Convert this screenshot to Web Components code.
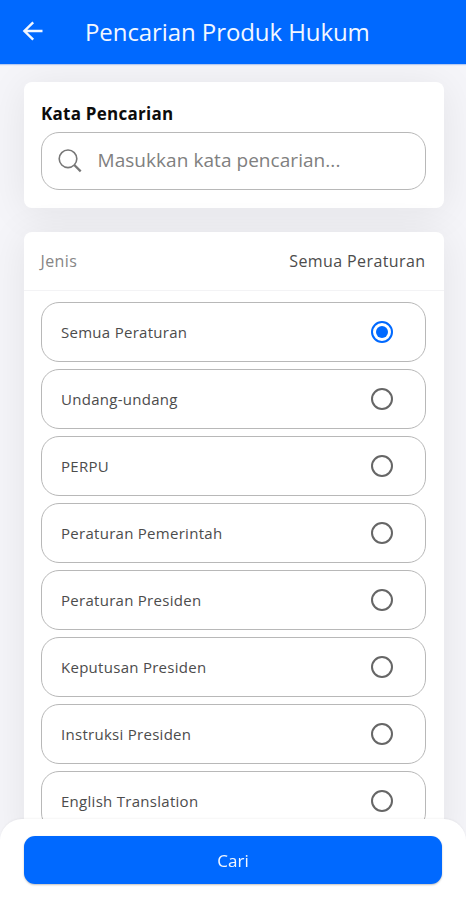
<!DOCTYPE html>
<html lang="id">
<head>
<meta charset="utf-8">
<meta name="viewport" content="width=device-width, initial-scale=1">
<title>Pencarian Produk Hukum</title>
<style>
body {
    margin: 0;
    height: 100vh;
    overflow: hidden;
    background: #f5f5f9;
    font-family: 'Open Sans', 'Noto Sans', sans-serif;
    color: #4c4c4c;
}
</style>
</head>
<body>
<search-page>
    <app-header slot="header">Pencarian Produk Hukum</app-header>
    <app-card>
        <search-field label="Kata Pencarian" placeholder="Masukkan kata pencarian..."></search-field>
    </app-card>
    <app-card>
        <filter-header slot="header" value="Semua Peraturan">Jenis</filter-header>
        <radio-list>
            <radio-option checked>Semua Peraturan</radio-option>
            <radio-option>Undang-undang</radio-option>
            <radio-option>PERPU</radio-option>
            <radio-option>Peraturan Pemerintah</radio-option>
            <radio-option>Peraturan Presiden</radio-option>
            <radio-option>Keputusan Presiden</radio-option>
            <radio-option>Instruksi Presiden</radio-option>
            <radio-option>English Translation</radio-option>
        </radio-list>
    </app-card>
    <bottom-bar slot="footer">Cari</bottom-bar>
</search-page>

<script>
class BaseElement extends HTMLElement {
    constructor() {
        super()
        const shadow = this.attachShadow({ mode: 'open' });
        const template = document.createElement('template')
        template.innerHTML = this.render()
        shadow.append(template.content.cloneNode(true))
    }
}

class SearchPage extends BaseElement {
    render() {
        return `
        <style>
        :host {
            display: flex;
            flex-direction: column;
            height: 100vh;
            overflow: hidden;
        }
        main {
            flex: 1;
            min-height: 0;
            display: flex;
            flex-direction: column;
            gap: 24px;
            padding: 18px 22.5px 0 23.5px;
            overflow: hidden;
        }
        </style>
        <slot name="header"></slot>
        <main><slot></slot></main>
        <slot name="footer"></slot>`
    }
}

class AppHeader extends BaseElement {
    render() {
        return `
        <style>
        :host {
            display: flex;
            align-items: center;
            flex: none;
            gap: 39px;
            box-sizing: border-box;
            height: 64px;
            padding: 0 20px;
            background: #0069ff;
            color: #f2f7ff;
            box-shadow: 0 1px 1px rgba(0, 80, 220, .25);
        }
        svg {
            display: block;
            flex: none;
            margin-top: -2px;
        }
        h1 {
            margin: 0;
            font-size: 24px;
            font-weight: 400;
            line-height: 64px;
            letter-spacing: -.08px;
            white-space: nowrap;
        }
        </style>
        <svg width="26" height="26" viewBox="0 0 26 26" fill="none" stroke="currentColor" stroke-width="2.4">
            <path d="M22.5 13H4.5M13.2 4.4L4.4 13l8.8 8.6"/>
        </svg>
        <h1><slot></slot></h1>`
    }
}

class AppCard extends BaseElement {
    render() {
        return `
        <style>
        :host {
            display: block;
            flex: none;
            border-radius: 8px;
            background: #fff;
            box-shadow: 0 4px 40px rgba(20, 20, 30, .08);
        }
        div {
            padding: 12px 18px 18px 17.5px;
        }
        </style>
        <slot name="header"></slot>
        <div><slot></slot></div>`
    }
}

class SearchField extends BaseElement {
    render() {
        return `
        <style>
        :host {
            display: block;
            padding-top: 8px;
        }
        label {
            display: block;
            font-size: 17px;
            font-weight: 700;
            line-height: 24px;
            letter-spacing: .25px;
            margin-bottom: 6px;
            color: #0c0c0c;
        }
        .box {
            display: flex;
            align-items: center;
            gap: 16px;
            box-sizing: border-box;
            height: 58px;
            padding: 0 15.5px;
            border: 1px solid #b8b8b8;
            border-radius: 18px;
            color: #808080;
            font-size: 19px;
            letter-spacing: .05px;
            white-space: nowrap;
        }
        .box span {
            margin-top: -2px;
        }
        svg {
            flex: none;
            margin-top: -1px;
        }
        </style>
        <label>${this.getAttribute('label')}</label>
        <div class="box">
            <svg width="24" height="24" viewBox="0 0 24 24" fill="none" stroke="#777">
                <circle cx="10" cy="9.8" r="8.8" stroke-width="1.6"/>
                <path d="M16.3 16l6.4 6.4" stroke-width="2.3"/>
            </svg>
            <span>${this.getAttribute('placeholder')}</span>
        </div>`
    }
}

class FilterHeader extends BaseElement {
    render() {
        return `
        <style>
        :host {
            display: flex;
            justify-content: space-between;
            align-items: center;
            box-sizing: border-box;
            height: 59px;
            margin-bottom: -1px;
            padding: 0 18px 0 17px;
            border-bottom: 1px solid #f3f3f5;
            font-size: 16px;
            letter-spacing: .4px;
        }
        .name {
            color: #868686;
        }
        </style>
        <span class="name"><slot></slot></span>
        <span>${this.getAttribute('value')}</span>`
    }
}

class RadioList extends BaseElement {
    render() {
        return `
        <style>
        :host {
            display: flex;
            flex-direction: column;
            gap: 7px;
        }
        </style>
        <slot></slot>`
    }
}

class RadioOption extends BaseElement {
    render() {
        return `
        <style>
        :host {
            display: flex;
            justify-content: space-between;
            align-items: center;
            box-sizing: border-box;
            height: 60px;
            padding: 0 32px 0 19px;
            border: 1px solid #b8b8b8;
            border-radius: 18px;
            font-size: 15px;
            letter-spacing: .28px;
        }
        i {
            display: grid;
            place-items: center;
            box-sizing: border-box;
            width: 22px;
            height: 22px;
            border: 2px solid #666;
            border-radius: 50%;
        }
        :host([checked]) i {
            border-color: #0069ff;
        }
        :host([checked]) i::before {
            content: '';
            width: 12px;
            height: 12px;
            border-radius: 50%;
            background: #0069ff;
        }
        </style>
        <span><slot></slot></span>
        <i></i>`
    }
}

class BottomBar extends BaseElement {
    render() {
        return `
        <style>
        :host {
            position: fixed;
            left: 0;
            right: 0;
            bottom: 0;
            box-sizing: border-box;
            height: 81px;
            padding: 17px 24px 0;
            border-radius: 22px 22px 0 0;
            background: #fff;
            box-shadow: 0 -1px 2px rgba(0, 0, 0, .04);
        }
        button {
            display: block;
            width: 100%;
            height: 48px;
            padding: 0;
            border: 0;
            border-radius: 11px;
            background: #0069ff;
            box-shadow: 0 1px 2px rgba(0, 0, 0, .25);
            color: #f2f7ff;
            font: inherit;
            font-size: 17px;
        }
        </style>
        <button><slot></slot></button>`
    }
}

customElements.define('search-page', SearchPage)
customElements.define('app-header', AppHeader)
customElements.define('app-card', AppCard)
customElements.define('search-field', SearchField)
customElements.define('filter-header', FilterHeader)
customElements.define('radio-list', RadioList)
customElements.define('radio-option', RadioOption)
customElements.define('bottom-bar', BottomBar)
</script>
</body>
</html>
